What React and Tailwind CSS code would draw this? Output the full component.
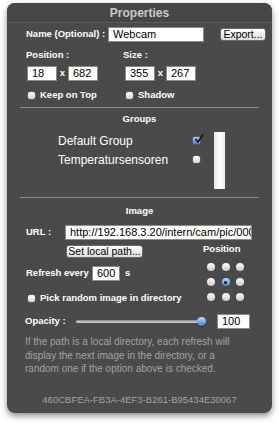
import React from "react";

const font = { fontFamily: '"Liberation Sans", Arial, sans-serif' };

const Field = ({ value, className = "" }) => (
  <div
    className={`flex h-[15px] items-center overflow-hidden whitespace-nowrap border border-[#8a8a8a] bg-white pl-[4px] text-[11px] font-normal leading-none text-black ${className}`}
  >
    {value}
  </div>
);

const Button = ({ label, className = "" }) => (
  <div
    className={`flex h-[13px] items-center justify-center rounded-[3px] border border-[#6a6a6a] bg-gradient-to-b from-white to-[#dcdcdc] text-[10.5px] font-normal leading-none text-black ${className}`}
  >
    {label}
  </div>
);

const Check = ({ checked }) => (
  <div className="relative h-[9px] w-[9px] shrink-0 rounded-[3px] border border-[#5a5a5a] bg-gradient-to-b from-white to-[#d4d4d4]">
    {checked && (
      <>
        <div className="absolute inset-0 rounded-[2px] bg-gradient-to-b from-[#a8c8f0] to-[#3d7fd6]" />
        <svg
          viewBox="0 0 10 10"
          className="absolute left-[1px] top-[-3px] h-[10px] w-[10px]"
        >
          <path d="M1.5 5 L4 8 L9 0.5" fill="none" stroke="#111" strokeWidth="1.6" />
        </svg>
      </>
    )}
  </div>
);

const Radio = ({ on }) => (
  <div
    className={`flex h-[8px] w-[8px] items-center justify-center rounded-full ${
      on
        ? "bg-gradient-to-b from-[#bcd8f8] to-[#3f86dc]"
        : "bg-gradient-to-b from-white to-[#c9c9c9]"
    }`}
  >
    {on && <div className="h-[3px] w-[3px] rounded-full bg-[#0d1a2e]" />}
  </div>
);

const Rule = () => <div className="ml-[13px] h-px w-[239px] bg-[#8c8c8c]" />;

export default function App() {
  return (
    <div className="h-[425px] w-[279px] bg-white pt-[3px]" style={font}>
      <div className="ml-[7px] flex h-[410px] w-[265px] flex-col rounded-[8px] bg-[#4a4a4a] shadow-[0_3px_6px_rgba(0,0,0,0.45)]">
        <div className="flex h-[20px] items-center justify-center rounded-t-[8px] border-b border-[#5d5d5d] bg-[#464646] text-[12px] font-bold text-[#c9c9c9]">
          Properties
        </div>

        <div className="mt-[4px] flex h-[15px] items-center pl-[19px] text-[9.5px] font-bold text-white">
          <span className="w-[82px]">Name (Optional) :</span>
          <Field value="Webcam" className="w-[96px]" />
          <Button label="Export..." className="ml-[16px] w-[46px]" />
        </div>

        <div className="mt-[7px] flex h-[12px] items-center pl-[19px] text-[9.5px] font-bold text-white">
          <span className="w-[97px]">Position :</span>
          <span>Size :</span>
        </div>

        <div className="mt-[5px] flex h-[15px] items-center pl-[20px] text-[9.5px] font-bold text-white">
          <Field value="18" className="w-[30px]" />
          <span className="w-[11px] text-center">x</span>
          <Field value="682" className="w-[30px]" />
          <Field value="355" className="ml-[27px] w-[30px]" />
          <span className="w-[11px] text-center">x</span>
          <Field value="267" className="w-[30px]" />
        </div>

        <div className="mt-[8px] flex h-[12px] items-center pl-[20px] text-[9.5px] font-bold text-white">
          <Check />
          <span className="ml-[4px] w-[85px]">Keep on Top</span>
          <Check />
          <span className="ml-[4px]">Shadow</span>
        </div>

        <div className="mt-[6px]">
          <Rule />
        </div>

        <div className="mt-[5px] flex h-[12px] items-center justify-center text-[9.5px] font-bold text-white">
          Groups
        </div>

        <div className="mt-[7px] flex h-[57px] pl-[51px]">
          <div className="flex w-[156px] flex-col text-[12px] text-white">
            <div className="flex h-[17px] items-center">
              <span className="w-[134px]">Default Group</span>
              <Check checked />
            </div>
            <div className="mt-[2px] flex h-[17px] items-center">
              <span className="w-[134px]">Temperatursensoren</span>
              <Check />
            </div>
          </div>
          <div className="w-[11px] bg-gradient-to-r from-[#e6e6e6] via-white to-[#ececec]" />
        </div>

        <div className="mt-[8px]">
          <Rule />
        </div>

        <div className="mt-[7px] flex h-[12px] items-center justify-center text-[9.5px] font-bold text-white">
          Image
        </div>

        <div className="mt-[8px] flex h-[15px] items-center pl-[19px] text-[9.5px] font-bold text-white">
          <span className="w-[39px]">URL :</span>
          <Field
            value="http://192.168.3.20/intern/cam/pic/0000001.jpg"
            className="w-[187px]"
          />
        </div>

        <div className="flex">
          <div className="flex w-[190px] flex-col">
            <Button label="Set local path..." className="ml-[59px] mt-[5px] w-[77px]" />
            <div className="mt-[8px] flex h-[15px] items-center pl-[19px] text-[9.5px] font-bold text-white">
              <span className="w-[66px]">Refresh every</span>
              <Field value="600" className="w-[28px]" />
              <span className="ml-[5px]">s</span>
            </div>
            <div className="mt-[11px] flex h-[12px] items-center pl-[20px] text-[9.5px] font-bold text-white">
              <Check />
              <span className="ml-[4px]">Pick random image in directory</span>
            </div>
          </div>
          <div className="flex flex-col">
            <div className="ml-[6px] mt-[3px] flex h-[12px] items-center text-[9.5px] font-bold text-white">
              Position
            </div>
            <div className="ml-[10px] mt-[8px] grid w-[37px] grid-cols-3 gap-x-[7px] gap-y-[7px]">
              <Radio />
              <Radio />
              <Radio />
              <Radio />
              <Radio on />
              <Radio />
              <Radio />
              <Radio />
              <Radio />
            </div>
          </div>
        </div>

        <div className="mt-[10px] flex h-[15px] items-center pl-[18px] text-[9.5px] font-bold text-white">
          <span className="w-[51px]">Opacity :</span>
          <div className="relative flex h-[15px] w-[131px] items-center">
            <div className="h-[3px] w-[128px] rounded-full bg-gradient-to-b from-[#8a8a8a] to-[#d8d8d8]" />
            <div className="absolute left-[121px] top-[3px] h-[9px] w-[9px] rounded-full bg-gradient-to-b from-[#c6dcf7] to-[#3a7fd8] shadow-[0_1px_1px_rgba(0,0,0,0.5)]" />
          </div>
          <Field value="100" className="ml-[10px] w-[33px]" />
        </div>

        <div className="mt-[6px] pl-[18px] pr-[10px] text-[10px] leading-[13.5px] text-[#a3a3a3]">
          If the path is a local directory, each refresh will
          <br />
          display the next image in the directory, or a
          <br />
          random one if the option above is checked.
        </div>

        <div className="mt-auto mb-[6px] text-center text-[9.5px] text-[#a3a3a3]">
          460CBFEA-FB3A-4EF3-B261-B95434E30067
        </div>
      </div>
    </div>
  );
}
